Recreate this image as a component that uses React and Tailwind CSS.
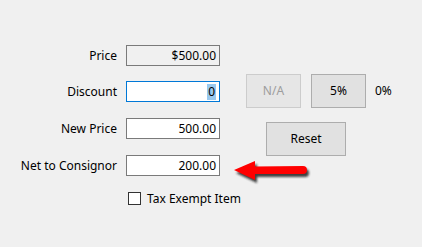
import React from "react";

const font = { fontFamily: '"Segoe UI", "Noto Sans", "Open Sans", sans-serif' };

function Row({ label, children, className = "" }) {
  return (
    <div className={"flex items-center h-[21px] " + className}>
      <div className="w-[118px] pr-[1px] text-right text-[12px] text-black leading-none whitespace-nowrap">{label}</div>
      <div className="ml-[8px]">{children}</div>
    </div>
  );
}

export default function App() {
  return (
    <div className="relative w-[422px] h-[247px] bg-[#f0f0f0] overflow-hidden" style={font}>
      <div className="flex pt-[45px]">
        <div className="flex flex-col w-[220px] shrink-0">
          <Row label="Price">
            <div className="w-[94px] h-[21px] border border-[#7a7a7a] bg-[#f0f0f0] text-[12px] text-black flex items-center justify-end pr-[3px] leading-none">$500.00</div>
          </Row>
          <Row label="Discount" className="mt-[15px]">
            <div className="w-[94px] h-[21px] border border-[#0078d7] bg-white text-[12px] text-black flex items-center justify-end pr-[3px] leading-none">
              <span className="bg-[#99c9ef] px-[1px] py-[2px]">0</span>
            </div>
          </Row>
          <Row label="New Price" className="mt-[16px]">
            <div className="w-[94px] h-[21px] border border-[#7a7a7a] bg-white text-[12px] text-black flex items-center justify-end pr-[3px] leading-none">500.00</div>
          </Row>
          <Row label="Net to Consignor" className="mt-[16px]">
            <div className="w-[94px] h-[21px] border border-[#7a7a7a] bg-white text-[12px] text-black flex items-center justify-end pr-[3px] leading-none">200.00</div>
          </Row>
          <div className="flex items-center mt-[16px] ml-[128px] whitespace-nowrap">
            <div className="w-[13px] h-[13px] shrink-0 border border-[#333333] bg-white"></div>
            <span className="ml-[6px] text-[12px] text-black leading-none">Tax Exempt Item</span>
          </div>
        </div>
        <div className="flex flex-col ml-[26px] pt-[29px]">
          <div className="flex items-center">
            <div className="w-[55px] h-[34px] border border-[#cccccc] bg-[#e6e6e6] text-[#9d9d9d] text-[12px] flex items-center justify-center leading-none">N/A</div>
            <div className="ml-[10px] w-[55px] h-[34px] border border-[#adadad] bg-[#e1e1e1] text-black text-[12px] flex items-center justify-center leading-none">5%</div>
            <span className="ml-[9px] text-[12px] text-black leading-none">0%</span>
          </div>
          <div className="ml-[20px] mt-[14px] w-[80px] h-[34px] border border-[#adadad] bg-[#e1e1e1] text-black text-[12px] flex items-center justify-center leading-none">Reset</div>
        </div>
      </div>
      <svg className="absolute left-[228px] top-[158px]" width="86" height="30" viewBox="0 0 86 30">
        <defs>
          <filter id="sh" x="-20%" y="-40%" width="140%" height="180%">
            <feGaussianBlur stdDeviation="1.2" />
          </filter>
        </defs>
        <g transform="translate(2,3)" filter="url(#sh)" fill="#222" opacity="0.85">
          <path d="M6 12 L27 3 L27 8.5 L75 8 A4 4 0 0 1 75 16 L27 16 L27 22 Z" />
        </g>
        <path d="M6 12 L27 3 L27 8.5 L75 8 A4 4 0 0 1 75 16 L27 16 L27 22 Z" fill="#ff0000" />
      </svg>
    </div>
  );
}
